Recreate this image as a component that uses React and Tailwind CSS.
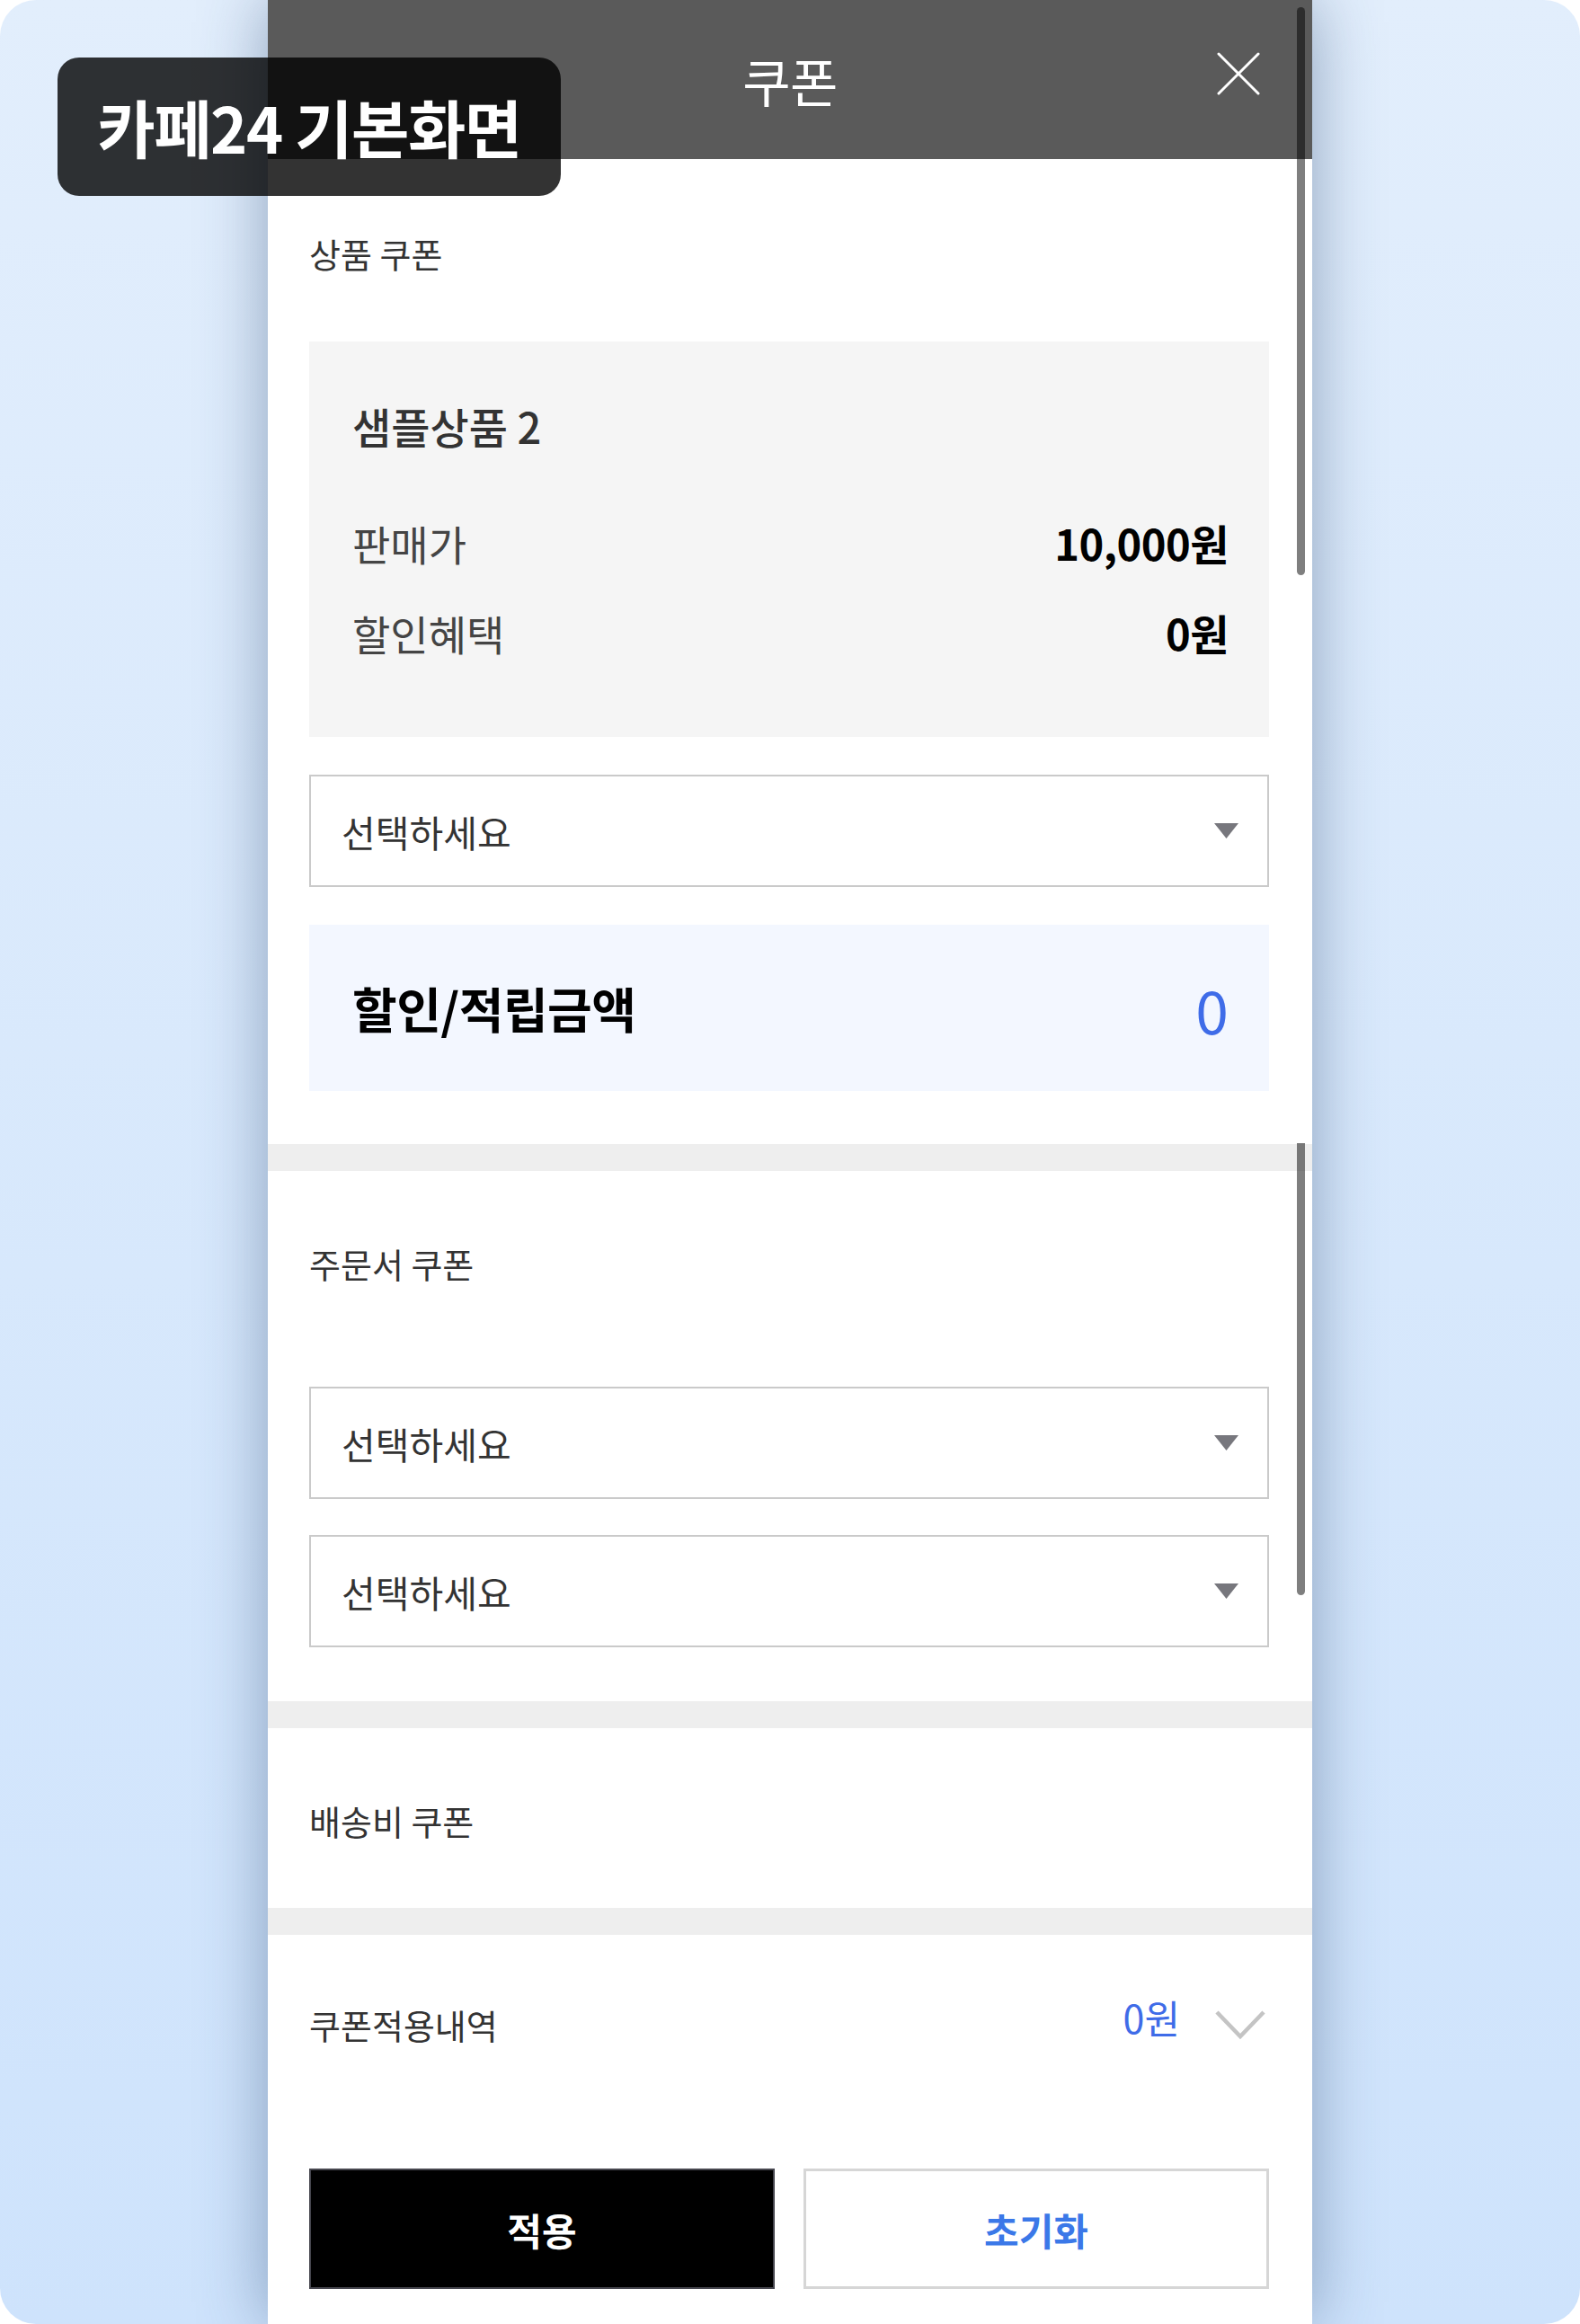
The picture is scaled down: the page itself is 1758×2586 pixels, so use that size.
import React from "react";

function Arrow() {
  return (
    <svg width="27" height="17" viewBox="0 0 27 17" className="shrink-0">
      <polygon points="0,0 27,0 13.5,17" fill="#77777d" />
    </svg>
  );
}

function Select() {
  return (
    <div className="h-[125px] border-2 border-[#cacaca] bg-white flex items-center justify-between pl-[34px] pr-[32px]">
      <span className="text-[41px] leading-[50px] text-[#333]">선택하세요</span>
      <Arrow />
    </div>
  );
}

function Divider() {
  return <div className="h-[30px] bg-[#eeeeee]" />;
}

export default function App() {
  return (
    <div className="w-full h-[2586px] bg-white font-['Noto_Sans_CJK_KR','Noto_Sans',sans-serif] relative">
      <div className="h-full rounded-[40px] overflow-hidden bg-gradient-to-b from-[#e2eefc] to-[#cee3fc] flex justify-center">
        <div className="w-[1162px] h-full bg-white relative shadow-[0_0_70px_rgba(40,70,115,0.45)] flex flex-col">
          {/* header */}
          <div className="h-[177px] shrink-0 bg-[#5a5a5a] flex items-center justify-center relative">
            <span className="text-white text-[58px] leading-[60px] tracking-[-0.5px]">쿠폰</span>
            <svg className="absolute right-[58px] top-[58px]" width="48" height="48" viewBox="0 0 48 48">
              <path d="M2 2 L46 46 M46 2 L2 46" stroke="#ffffff" strokeWidth="3" strokeLinecap="round" />
            </svg>
          </div>

          {/* product coupon */}
          <div className="pl-[46px] pr-[48px] pt-[80px]">
            <div className="text-[38px] leading-[50px] text-[#333]">상품 쿠폰</div>
            <div className="mt-[73px] h-[440px] bg-[#f5f5f5] px-[48px] pr-[45px] pt-[64px]">
              <div className="text-[47px] leading-[60px] font-medium text-[#333]">샘플상품 2</div>
              <div className="mt-[70px] flex justify-between items-center h-[60px]">
                <span className="text-[46px] text-[#444]">판매가</span>
                <span className="text-[47px] font-bold text-black tracking-[-0.5px]">10,000원</span>
              </div>
              <div className="mt-[40px] flex justify-between items-center h-[60px]">
                <span className="text-[46px] text-[#444]">할인혜택</span>
                <span className="text-[47px] font-bold text-black tracking-[-0.5px]">0원</span>
              </div>
            </div>
            <div className="mt-[42px]">
              <Select />
            </div>
            <div className="mt-[42px] h-[185px] bg-[#f3f7ff] flex items-center justify-between pl-[48px] pr-[45px]">
              <span className="text-[54px] leading-[60px] font-bold text-black tracking-[-0.5px]">할인/적립금액</span>
              <span className="text-[66px] leading-[70px] text-[#3f6ce8]">0</span>
            </div>
          </div>

          <div className="mt-[59px]">
            <Divider />
          </div>

          {/* order coupon */}
          <div className="pl-[46px] pr-[48px] pt-[78px] pb-[60px]">
            <div className="text-[38px] leading-[50px] text-[#333]">주문서 쿠폰</div>
            <div className="mt-[112px] flex flex-col gap-[40px]">
              <Select />
              <Select />
            </div>
          </div>

          <Divider />

          {/* shipping coupon */}
          <div className="pl-[46px] pr-[48px] pt-[78px] pb-[72px]">
            <div className="text-[38px] leading-[50px] text-[#333]">배송비 쿠폰</div>
          </div>

          <Divider />

          {/* applied */}
          <div className="pl-[46px] pr-[48px] pt-[75px]">
            <div className="flex items-center justify-between h-[50px]">
              <span className="text-[38px] leading-[50px] text-[#333]">쿠폰적용내역</span>
              <div className="flex items-center gap-[38px] pr-[3px]">
                <span className="text-[43px] leading-[50px] text-[#3f6ce8] -mt-[18px]">0원</span>
                <svg width="58" height="34" viewBox="0 0 58 34">
                  <path d="M3 3 L29 30 L55 3" fill="none" stroke="#c4c4c4" strokeWidth="4.5" />
                </svg>
              </div>
            </div>
            <div className="mt-[135px] grid grid-cols-2 gap-[32px]">
              <button className="h-[134px] bg-black border-2 border-[#46464e] text-white text-[42px] font-bold">적용</button>
              <button className="h-[134px] bg-white border-[3px] border-[#d6d6d6] text-[#3b78e8] text-[42px] font-bold">초기화</button>
            </div>
          </div>

          {/* scrollbars */}
          <div className="absolute right-[8px] top-[8px] w-[9px] h-[632px] rounded-full bg-black/50" />
          <div className="absolute right-[8px] top-[1272px] w-[9px] h-[503px] rounded-b-full bg-black/50" />
        </div>
      </div>

      {/* badge */}
      <div className="absolute left-[64px] top-[64px] w-[560px] h-[154px] rounded-[24px] bg-black/80 flex items-center justify-center">
        <span className="text-white text-[70px] leading-[80px] font-bold tracking-[-1.5px]">카페24 기본화면</span>
      </div>
    </div>
  );
}
